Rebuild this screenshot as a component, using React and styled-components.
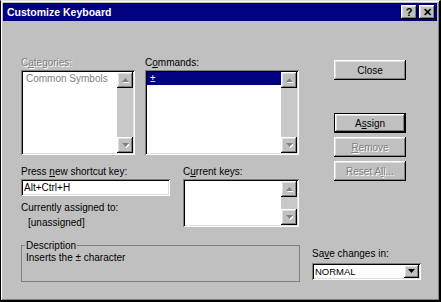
import React from "react";
import styled, { createGlobalStyle, css } from "styled-components";

const GlobalStyle = createGlobalStyle`
  html, body {
    margin: 0;
    padding: 0;
    background: #c0c0c0;
  }
  body {
    font-family: "Liberation Sans", Arial, sans-serif;
    font-size: 10px;
    color: #000;
  }
`;

const raised = css`
  box-shadow: inset -1px -1px #000, inset 1px 1px #fff, inset -2px -2px #808080,
    inset 2px 2px #dfdfdf;
`;

const sunken = css`
  box-shadow: inset 1px 1px #808080, inset -1px -1px #fff, inset 2px 2px #000,
    inset -2px -2px #dfdfdf;
`;

const etched = css`
  color: #808080;
  text-shadow: 1px 1px 0 #fff;
`;

const Window = styled.div`
  width: 441px;
  height: 302px;
  box-sizing: border-box;
  background: #c0c0c0;
  border-style: solid;
  border-color: #dfdfdf #000 #000 #000;
  border-width: 1px 2px 2px 1px;
  padding: 2px;
  box-shadow: inset 1px 1px #fff, inset -1px -1px #808080;
  display: flex;
  flex-direction: column;
`;

const TitleBar = styled.div`
  height: 18px;
  flex-shrink: 0;
  background: #000080;
  color: #fff;
  display: flex;
  align-items: center;
  justify-content: space-between;
  padding: 0 2px 0 4px;
`;

const Title = styled.span`
  font-weight: bold;
  font-size: 10.5px;
`;

const TitleButtons = styled.div`
  display: flex;
  gap: 2px;
`;

const TitleButton = styled.div`
  width: 16px;
  height: 14px;
  background: #c0c0c0;
  ${raised};
  color: #000;
  font-weight: bold;
  font-size: 11px;
  display: flex;
  align-items: center;
  justify-content: center;
  line-height: 1;
`;

const Body = styled.div`
  flex: 1;
  display: grid;
  grid-template-columns: 279px 109px;
  column-gap: 12px;
  align-content: start;
  padding: 35px 0 0 18px;
`;

const LeftCol = styled.div`
  display: flex;
  flex-direction: column;
`;

const Row = styled.div`
  display: flex;
  align-items: flex-start;
  gap: ${(p) => p.$gap}px;
  margin-top: ${(p) => p.$top || 0}px;
`;

const Field = styled.div`
  display: flex;
  flex-direction: column;
  width: ${(p) => p.$width}px;
`;

const Label = styled.div`
  height: 13px;
  line-height: 13px;
  margin-bottom: ${(p) => p.$gap ?? 1}px;
  white-space: nowrap;
  ${(p) => p.$disabled && etched};
`;

const ListBox = styled.div`
  height: ${(p) => p.$height}px;
  box-sizing: border-box;
  padding: 2px;
  background: #fff;
  ${sunken};
  display: flex;
`;

const Items = styled.div`
  flex: 1;
  display: flex;
  flex-direction: column;
`;

const Item = styled.div`
  height: 13px;
  line-height: 13px;
  padding: 0 3px;
  white-space: nowrap;
  background: ${(p) => (p.$selected ? "#000080" : "transparent")};
  color: ${(p) => (p.$selected ? "#fff" : p.$disabled ? "#808080" : "#000")};
`;

const ScrollBar = styled.div`
  width: 16px;
  display: flex;
  flex-direction: column;
  justify-content: space-between;
  background: #c8c8c8;
`;

const ArrowButton = styled.div`
  width: 16px;
  height: 16px;
  background: #c0c0c0;
  ${raised};
  display: flex;
  align-items: center;
  justify-content: center;
`;

const TextBox = styled.div`
  height: 17px;
  box-sizing: border-box;
  background: #fff;
  ${sunken};
  padding: 0 3px;
  line-height: 17px;
`;

const Info = styled.div`
  margin-top: 4px;
  line-height: 15px;
`;

const Indent = styled.div`
  padding-left: 7px;
`;

const Group = styled.fieldset`
  margin: 9px 0 0;
  height: 43px;
  box-sizing: border-box;
  border: 1px solid #808080;
  padding: 0 4px;
  min-width: 0;
`;

const Legend = styled.legend`
  padding: 0 1px;
  margin-left: -1px;
  line-height: 13px;
`;

const GroupText = styled.div`
  line-height: 12px;
`;

const RightCol = styled.div`
  display: flex;
  flex-direction: column;
`;

const Button = styled.button`
  width: 72px;
  height: 20px;
  margin: ${(p) => p.$top}px 0 0 22px;
  padding: 0;
  box-sizing: border-box;
  font: inherit;
  background: #c0c0c0;
  color: #000;
  border: ${(p) => (p.$default ? "1px solid #000" : "none")};
  ${raised};
  ${(p) => p.disabled && etched};
`;

const SaveSection = styled.div`
  margin-top: auto;
  margin-bottom: 2px;
  display: flex;
  flex-direction: column;
`;

const Combo = styled.div`
  height: 17px;
  box-sizing: border-box;
  background: #fff;
  ${sunken};
  padding: 2px;
  display: flex;
  align-items: center;
`;

const ComboText = styled.span`
  flex: 1;
  padding-left: 1px;
  font-size: 9.5px;
`;

const DropButton = styled.div`
  width: 15px;
  height: 13px;
  background: #c0c0c0;
  ${raised};
  display: flex;
  align-items: center;
  justify-content: center;
`;

const Arrow = ({ down, color = "#808080", shadow = true }) => (
  <svg width="7" height="5" viewBox="0 0 7 5">
    {shadow && (
      <polygon
        points={down ? "1,1 8,1 4.5,5" : "4.5,1 8,5 1,5"}
        fill="#fff"
      />
    )}
    <polygon points={down ? "0,0 7,0 3.5,4" : "3.5,0 7,4 0,4"} fill={color} />
  </svg>
);

const Scroll = () => (
  <ScrollBar>
    <ArrowButton>
      <Arrow />
    </ArrowButton>
    <ArrowButton>
      <Arrow down />
    </ArrowButton>
  </ScrollBar>
);

export default function App() {
  return (
    <>
      <GlobalStyle />
      <Window>
        <TitleBar>
          <Title>Customize Keyboard</Title>
          <TitleButtons>
            <TitleButton>?</TitleButton>
            <TitleButton>✕</TitleButton>
          </TitleButtons>
        </TitleBar>
        <Body>
          <LeftCol>
            <Row $gap={10}>
              <Field $width={114}>
                <Label $disabled>
                  C<u>a</u>tegories:
                </Label>
                <ListBox $height={85}>
                  <Items>
                    <Item $disabled>Common Symbols</Item>
                  </Items>
                  <Scroll />
                </ListBox>
              </Field>
              <Field $width={154}>
                <Label>
                  C<u>o</u>mmands:
                </Label>
                <ListBox $height={85}>
                  <Items>
                    <Item $selected>±</Item>
                  </Items>
                  <Scroll />
                </ListBox>
              </Field>
            </Row>
            <Row $gap={13} $top={10}>
              <Field $width={149}>
                <Label>
                  Press <u>n</u>ew shortcut key:
                </Label>
                <TextBox>Alt+Ctrl+H</TextBox>
                <Info>
                  Currently assigned to:
                  <Indent>[unassigned]</Indent>
                </Info>
              </Field>
              <Field $width={116}>
                <Label>
                  C<u>u</u>rrent keys:
                </Label>
                <ListBox $height={48}>
                  <Items />
                  <Scroll />
                </ListBox>
              </Field>
            </Row>
            <Group>
              <Legend>Description</Legend>
              <GroupText>Inserts the ± character</GroupText>
            </Group>
          </LeftCol>
          <RightCol>
            <Button $top={4}>Close</Button>
            <Button $top={33} $default>
              A<u>s</u>sign
            </Button>
            <Button $top={4} disabled>
              <u>R</u>emove
            </Button>
            <Button $top={4} disabled>
              Reset A<u>l</u>l...
            </Button>
            <SaveSection>
              <Label $gap={3}>
                Sa<u>v</u>e changes in:
              </Label>
              <Combo>
                <ComboText>NORMAL</ComboText>
                <DropButton>
                  <Arrow down color="#000" shadow={false} />
                </DropButton>
              </Combo>
            </SaveSection>
          </RightCol>
        </Body>
      </Window>
    </>
  );
}
